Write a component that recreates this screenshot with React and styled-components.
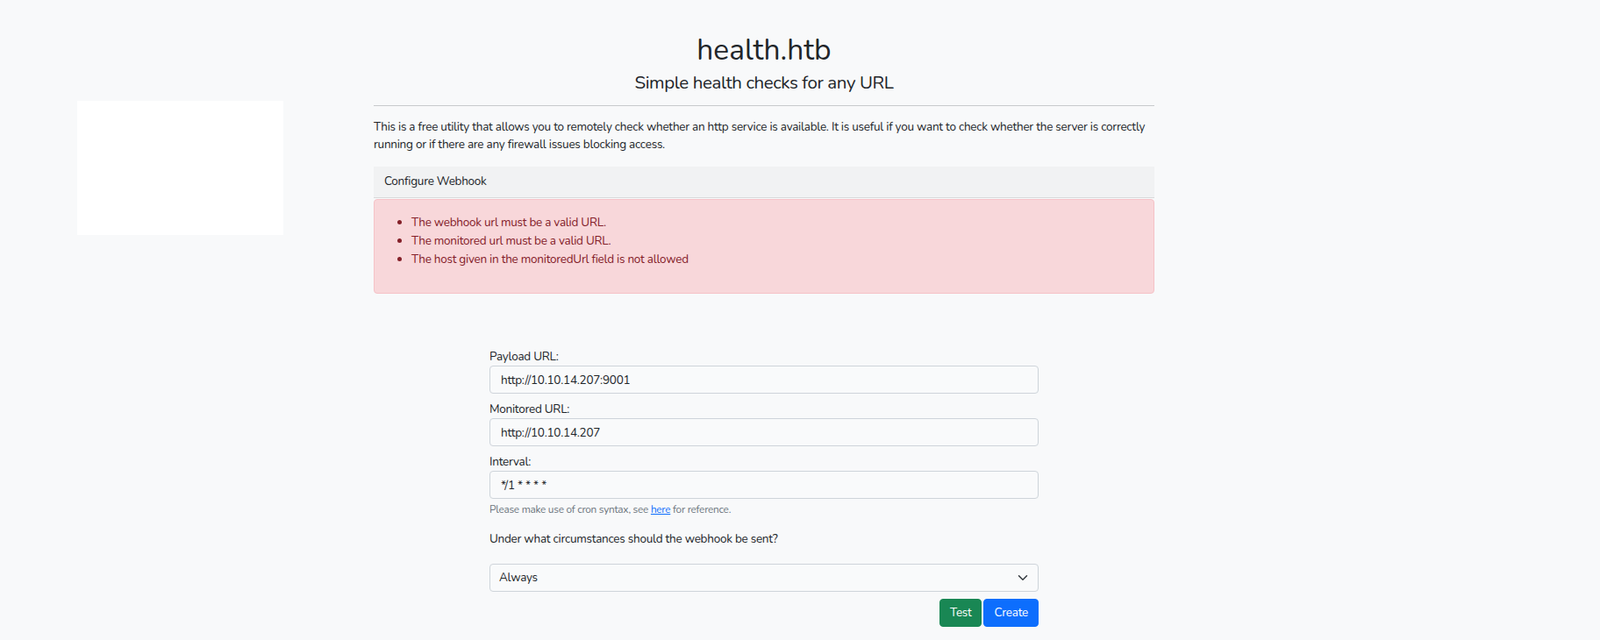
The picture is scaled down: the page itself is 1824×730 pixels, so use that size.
import styled, { createGlobalStyle } from "styled-components";

const fields = [
  { id: "webhookUrl", label: "Payload URL:", value: "http://10.10.14.207:9001" },
  { id: "monitoredUrl", label: "Monitored URL:", value: "http://10.10.14.207" },
  { id: "frequency", label: "Interval:", value: "*/1 * * * *", help: true },
];

const errors = [
  "The webhook url must be a valid URL.",
  "The monitored url must be a valid URL.",
  "The host given in the monitoredUrl field is not allowed",
];

const App = () => {
  return (
    <>
      <GlobalStyle />
      <Page>
        <Aside>
          <Placeholder />
        </Aside>
        <Main>
          <Title>health.htb</Title>
          <Subtitle>Simple health checks for any URL</Subtitle>
          <Rule />
          <Intro>
            This is a free utility that allows you to remotely check whether an http service is
            available. It is useful if you want to check whether the server is correctly running or
            if there are any firewall issues blocking access.
          </Intro>
          <Card>
            <CardHeader>Configure Webhook</CardHeader>
            <Alert>
              <ErrorList>
                {errors.map((e) => (
                  <li key={e}>{e}</li>
                ))}
              </ErrorList>
            </Alert>
          </Card>

          <Form>
            {fields.map((f) => (
              <Field key={f.id}>
                <Label htmlFor={f.id}>{f.label}</Label>
                <Input id={f.id} value={f.value} readOnly />
                {f.help && (
                  <Help>
                    Please make use of cron syntax, see <HelpLink href="#">here</HelpLink> for
                    reference.
                  </Help>
                )}
              </Field>
            ))}
            <Question>Under what circumstances should the webhook be sent?</Question>
            <SelectWrap>
              <Select defaultValue="always">
                <option value="always">Always</option>
                <option value="onUp">Only when Service is up</option>
                <option value="onDown">Only when Service is down</option>
              </Select>
              <Chevron viewBox="0 0 16 16" width="16" height="12">
                <path
                  d="m2 5 6 6 6-6"
                  fill="none"
                  stroke="#343a40"
                  strokeWidth="2"
                  strokeLinecap="round"
                  strokeLinejoin="round"
                />
              </Chevron>
            </SelectWrap>
            <Actions>
              <Button $variant="success">Test</Button>
              <Button $variant="primary">Create</Button>
            </Actions>
          </Form>
        </Main>
      </Page>
    </>
  );
};

const GlobalStyle = createGlobalStyle`
  body {
    margin: 0;
    background: #f8f9fa;
    color: #212529;
    font-family: "Nunito", "Lato", "Open Sans", sans-serif;
    font-size: 13.5px;
    letter-spacing: -0.25px;
    line-height: 1.5;
  }
  * { box-sizing: border-box; }
`;

const Page = styled.div`
  display: flex;
  align-items: flex-start;
  gap: 103px;
  padding-left: 88px;
  min-height: 730px;
`;

const Aside = styled.aside`
  width: 235px;
  padding-top: 115px;
`;

const Placeholder = styled.div`
  height: 153px;
  background: #fff;
`;

const Main = styled.main`
  width: 890px;
  padding-top: 36px;
`;

const Title = styled.h1`
  margin: 0;
  text-align: center;
  font-size: 33.5px;
  font-weight: 400;
  letter-spacing: 0;
  line-height: 42px;
`;

const Subtitle = styled.h3`
  margin: 2px 0 0;
  text-align: center;
  font-size: 20.5px;
  font-weight: 400;
  letter-spacing: -0.4px;
  line-height: 29px;
`;

const Rule = styled.hr`
  margin: 11px 0 14px;
  border: 0;
  border-top: 1px solid #c8cacc;
`;

const Intro = styled.p`
  margin: 0 0 15px;
  line-height: 20px;
`;

const Card = styled.section``;

const CardHeader = styled.div`
  padding: 7px 12px 8px;
  line-height: 20px;
  background: #f1f2f3;
  border-bottom: 1px solid #d8d9da;
`;

const Alert = styled.div`
  margin-top: 1px;
  padding: 15px 14px 14px;
  background: #f8d7da;
  border: 1px solid #f5c2c7;
  border-radius: 4px;
  color: #842029;
`;

const ErrorList = styled.ul`
  margin: 0 0 14px;
  padding-left: 28px;
  line-height: 21px;
`;

const Form = styled.form`
  width: 626px;
  margin: 61px auto 0;
`;

const Field = styled.div`
  margin-bottom: 7px;
`;

const Label = styled.label`
  display: block;
  line-height: 21px;
`;

const Input = styled.input`
  display: block;
  width: 100%;
  height: 32px;
  padding: 5px 12px;
  font: inherit;
  letter-spacing: inherit;
  line-height: 20px;
  color: #212529;
  background: #f9fafb;
  border: 1px solid #ced4da;
  border-radius: 4px;
  outline: none;
`;

const Help = styled.div`
  margin-top: 3px;
  font-size: 11.8px;
  line-height: 18px;
  color: #6c757d;
`;

const HelpLink = styled.a`
  color: #0d6efd;
  text-decoration: underline;
`;

const Question = styled.p`
  margin: 14px 0 18px;
  line-height: 21px;
`;

const SelectWrap = styled.div`
  position: relative;
`;

const Select = styled.select`
  display: block;
  width: 100%;
  height: 32px;
  padding: 5px 36px 5px 10px;
  font: inherit;
  letter-spacing: inherit;
  line-height: 20px;
  color: #212529;
  background: #f9fafb;
  border: 1px solid #ced4da;
  border-radius: 4px;
  appearance: none;
  outline: none;
`;

const Chevron = styled.svg`
  position: absolute;
  right: 10px;
  top: 10px;
  pointer-events: none;
`;

const Actions = styled.div`
  display: flex;
  justify-content: flex-end;
  gap: 2px;
  margin-top: 8px;
`;

const Button = styled.button`
  height: 32px;
  padding: 5px 11px;
  font: inherit;
  letter-spacing: inherit;
  line-height: 20px;
  color: #fff;
  background: ${(p) => (p.$variant === "success" ? "#198754" : "#0d6efd")};
  border: 1px solid ${(p) => (p.$variant === "success" ? "#198754" : "#0d6efd")};
  border-radius: 4px;
  cursor: pointer;
`;

export default App;
